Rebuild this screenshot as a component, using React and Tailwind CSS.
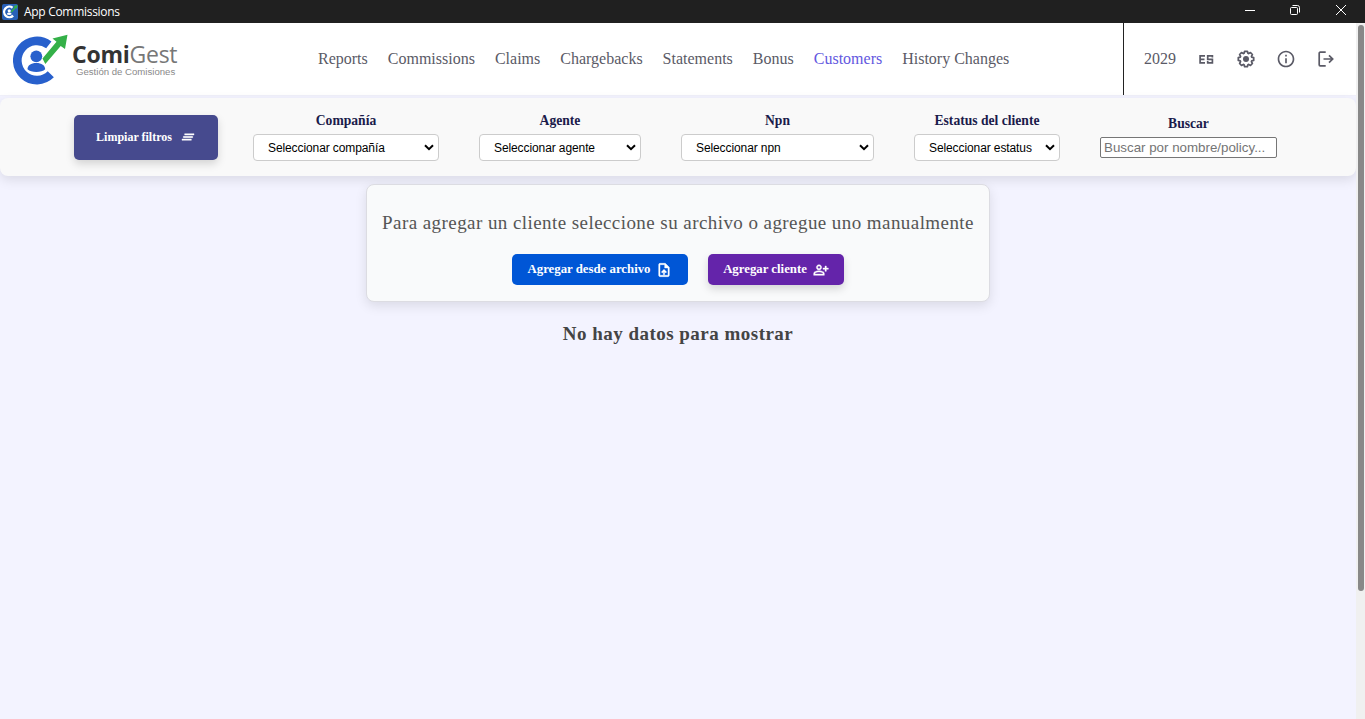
import { useState } from 'react';
import {
  MdClearAll,
  MdInfoOutline,
  MdOutlinePersonAddAlt,
  MdOutlineUploadFile,
} from 'react-icons/md';

const links = [
  'Reports',
  'Commissions',
  'Claims',
  'Chargebacks',
  'Statements',
  'Bonus',
  'Customers',
  'History Changes',
];

const filters = [
  { label: 'Compañía', placeholder: 'Seleccionar compañía', width: 'w-[186px]' },
  { label: 'Agente', placeholder: 'Seleccionar agente', width: 'w-[162px]' },
  { label: 'Npn', placeholder: 'Seleccionar npn', width: 'w-[193px]' },
  { label: 'Estatus del cliente', placeholder: 'Seleccionar estatus', width: 'w-[146px]' },
];

// slightly heavier strokes for the small button icons
const boldIcon = '[&>path:last-child]:stroke-white [&>path:last-child]:stroke-[0.6px]';

function LogoMark({ className, ring = '#2860cc', person = '#2860cc' }) {
  return (
    <svg viewBox="0 0 56 52" className={className} fill="none">
      <path d="M35.800 11.900A19.600 19.600 0 1 0 37.800 41.300" stroke={ring} strokeWidth="8.700" />
      <circle cx="23.300" cy="23.300" r="5.900" fill={person} />
      <path d="M14.500 36.300c0-4 3.500-6.300 8.800-6.300s8.900 2.300 8.900 6.300c-3.500 3.600-14.200 3.600-17.700 0z" fill={person} />
      <path d="M29.500 25.500L43.500 8.800l-4-3.400L54.500 1.800L52 16l-4.300-2.900L32.300 31z" fill="#34b048" />
    </svg>
  );
}

function SpanishIcon() {
  return (
    <svg viewBox="0 0 20 20" className="size-5" fill="none" stroke="currentColor" strokeWidth="1.700">
      <path d="M9 6.800H4.100v7H9M4.100 10.300h4.400" />
      <path d="M16.400 8.600V6.800h-4.700v3.500h4.700v3.500h-4.700v-1.800" />
    </svg>
  );
}

function SettingsIcon() {
  return (
    <svg viewBox="0 0 20 20" className="size-5" fill="none" stroke="currentColor" strokeWidth="1.700" strokeLinejoin="round">
      <path d="M8.600 2.300h2.800l.5 2 .8.300 1.800-1 1.900 1.900-1 1.800.3.800 2 .5v2.800l-2 .5-.3.800 1 1.800-1.900 1.900-1.800-1-.8.300-.5 2H8.600l-.5-2-.8-.3-1.800 1-1.900-1.900 1-1.800-.3-.8-2-.5V8.600l2-.5.300-.8-1-1.800 1.900-1.900 1.800 1 .8-.3z" />
      <circle cx="10" cy="10" r="3" fill="currentColor" stroke="none" />
    </svg>
  );
}

function LogoutIcon() {
  return (
    <svg viewBox="0 0 20 20" className="size-5" fill="none" stroke="currentColor" strokeWidth="1.700">
      <path d="M9.700 3.200H4.200a1 1 0 0 0-1 1v11.600a1 1 0 0 0 1 1h5.500" />
      <path d="M7.500 10h9M13 6.300L16.700 10 13 13.700" />
    </svg>
  );
}

function TitleBar() {
  return (
    <div className="flex h-[23px] shrink-0 items-center bg-[#202020] pl-[2px] text-white">
      <div className="flex size-4 items-center justify-center rounded-[2px] bg-[#2860b8]">
        <LogoMark className="size-[15px]" ring="#fff" person="#fff" />
      </div>
      <span className="ml-[6px] font-['Open_Sans','Noto_Sans',sans-serif] text-[12px] leading-none tracking-[-0.300px]">
        App Commissions
      </span>
      <div className="ml-auto flex items-center pr-[18px] pb-[3px]">
        <svg viewBox="0 0 12 12" className="mr-[33px] size-3" fill="none" stroke="currentColor">
          <path d="M1 6.500h10" />
        </svg>
        <svg viewBox="0 0 12 12" className="mr-[34px] size-3" fill="none" stroke="currentColor">
          <rect x="1.500" y="3.500" width="7" height="7" rx="1" />
          <path d="M3.500 1.500h5a2 2 0 0 1 2 2v5" />
        </svg>
        <svg viewBox="0 0 12 12" className="size-3" fill="none" stroke="currentColor">
          <path d="M1 1l10 10M11 1L1 11" />
        </svg>
      </div>
    </div>
  );
}

function Header({ active, onSelect }) {
  return (
    <header className="flex h-[73px] items-stretch border-b border-[#f0f0fa] bg-white">
      <div className="flex w-[318px] items-center pl-[13px]">
        <LogoMark className="h-[52px] w-[56px]" />
        <div className="ml-[3px]">
          <div className="font-['Open_Sans',sans-serif] text-[23px] leading-[24px] font-medium tracking-[-0.250px] text-[#777]">
            <b className="text-[#333]">Comi</b>Gest
          </div>
          <div className="ml-1 font-['Liberation_Sans',sans-serif] text-[9.600px] leading-[11px] text-[#8a8a8a]">
            Gestión de Comisiones
          </div>
        </div>
      </div>
      <nav className="flex items-center gap-5">
        {links.map((link) => (
          <button
            key={link}
            onClick={() => onSelect(link)}
            className={link === active ? 'text-[#6358e0]' : 'text-[#5a5a66]'}
          >
            {link}
          </button>
        ))}
      </nav>
      <div className="ml-auto flex w-[233px] items-center border-l border-[#222] pl-5 text-[#5a5a66]">
        <span className="w-[52px]">2029</span>
        <div className="flex items-center gap-5">
          <SpanishIcon />
          <SettingsIcon />
          <MdInfoOutline size={20} />
          <LogoutIcon />
        </div>
      </div>
    </header>
  );
}

function FilterBar() {
  return (
    <section className="mt-[2px] flex h-[78px] items-center rounded-lg bg-[#f9f9f9] pl-[74px] shadow-[0_4px_12px_rgba(0,0,0,0.1)]">
      <button className="mr-[35px] flex h-[45px] w-36 items-center justify-center gap-2 rounded-[5px] bg-[#464a8e] text-[12px] font-bold text-white shadow-[0_4px_8px_rgba(0,0,0,0.15)]">
        Limpiar filtros
        <MdClearAll size={16} className={boldIcon} />
      </button>
      <div className="flex items-center gap-10 pb-[2px]">
        {filters.map((f) => (
          <div key={f.label} className="flex flex-col items-center">
            <label className="mb-1 text-[13.600px] leading-[19px] font-bold text-[#1b1b4b]">{f.label}</label>
            <div className={`relative h-[27px] ${f.width}`}>
              <select className="h-full w-full appearance-none rounded-[4px] border border-[#ccc] bg-white pl-[14px] font-['Liberation_Sans',sans-serif] text-[12px] tracking-[-0.100px] text-black">
                <option>{f.placeholder}</option>
              </select>
              <svg viewBox="0 0 10 7" className="pointer-events-none absolute top-[10px] right-[5px] h-[7px] w-[10px]" fill="none" stroke="black" strokeWidth="2">
                <path d="M1 1.200l4 4 4-4" />
              </svg>
            </div>
          </div>
        ))}
        <div className="flex flex-col items-center">
          <label className="mb-1 text-[13.600px] leading-[19px] font-bold text-[#1b1b4b]">Buscar</label>
          <input
            className="h-[21px] w-[177px] rounded-[2px] border border-[#767676] bg-white px-[3px] font-['Liberation_Sans',sans-serif] text-[13.333px] placeholder:text-[#757575]"
            placeholder="Buscar por nombre/policy..."
          />
        </div>
      </div>
    </section>
  );
}

function AddClientCard() {
  return (
    <section className="mx-auto mt-2 flex h-[118px] w-[624px] flex-col items-center rounded-lg border border-[#dcdce2] bg-[#f9fafb] pt-[26px] shadow-[0_4px_12px_rgba(0,0,0,0.1)]">
      <p className="text-[19px] leading-6 tracking-[0.430px] whitespace-nowrap text-[#555]">
        Para agregar un cliente seleccione su archivo o agregue uno manualmente
      </p>
      <div className="mt-[19px] flex gap-5 text-[12.800px] leading-[19px] font-bold text-white">
        <button className="flex h-[31px] w-44 items-center justify-center gap-[6px] rounded-[5px] bg-[#0056d6]">
          Agregar desde archivo
          <MdOutlineUploadFile size={16} className={boldIcon} />
        </button>
        <button className="flex h-[31px] w-[136px] items-center justify-center gap-[6px] rounded-[5px] bg-[#6424aa] shadow-[0_4px_8px_rgba(0,0,0,0.15)]">
          Agregar cliente
          <MdOutlinePersonAddAlt size={16} className={boldIcon} />
        </button>
      </div>
    </section>
  );
}

export default function App() {
  const [active, setActive] = useState('Customers');

  return (
    <div className="flex h-screen flex-col overflow-hidden bg-[#f3f3ff] font-['Liberation_Serif',serif]">
      <TitleBar />
      <div className="flex min-h-0 flex-1">
        <main className="w-[1356px]">
          <Header active={active} onSelect={setActive} />
          <FilterBar />
          <AddClientCard />
          <h2 className="mt-5 text-center text-[19px] leading-6 font-bold tracking-[0.480px] text-[#444]">
            No hay datos para mostrar
          </h2>
        </main>
        <div className="w-[9px] bg-[#f0f0f0] pt-[2px] pr-px pl-[2px]">
          <div className="h-[566px] rounded-full bg-[#888]" />
        </div>
      </div>
    </div>
  );
}
